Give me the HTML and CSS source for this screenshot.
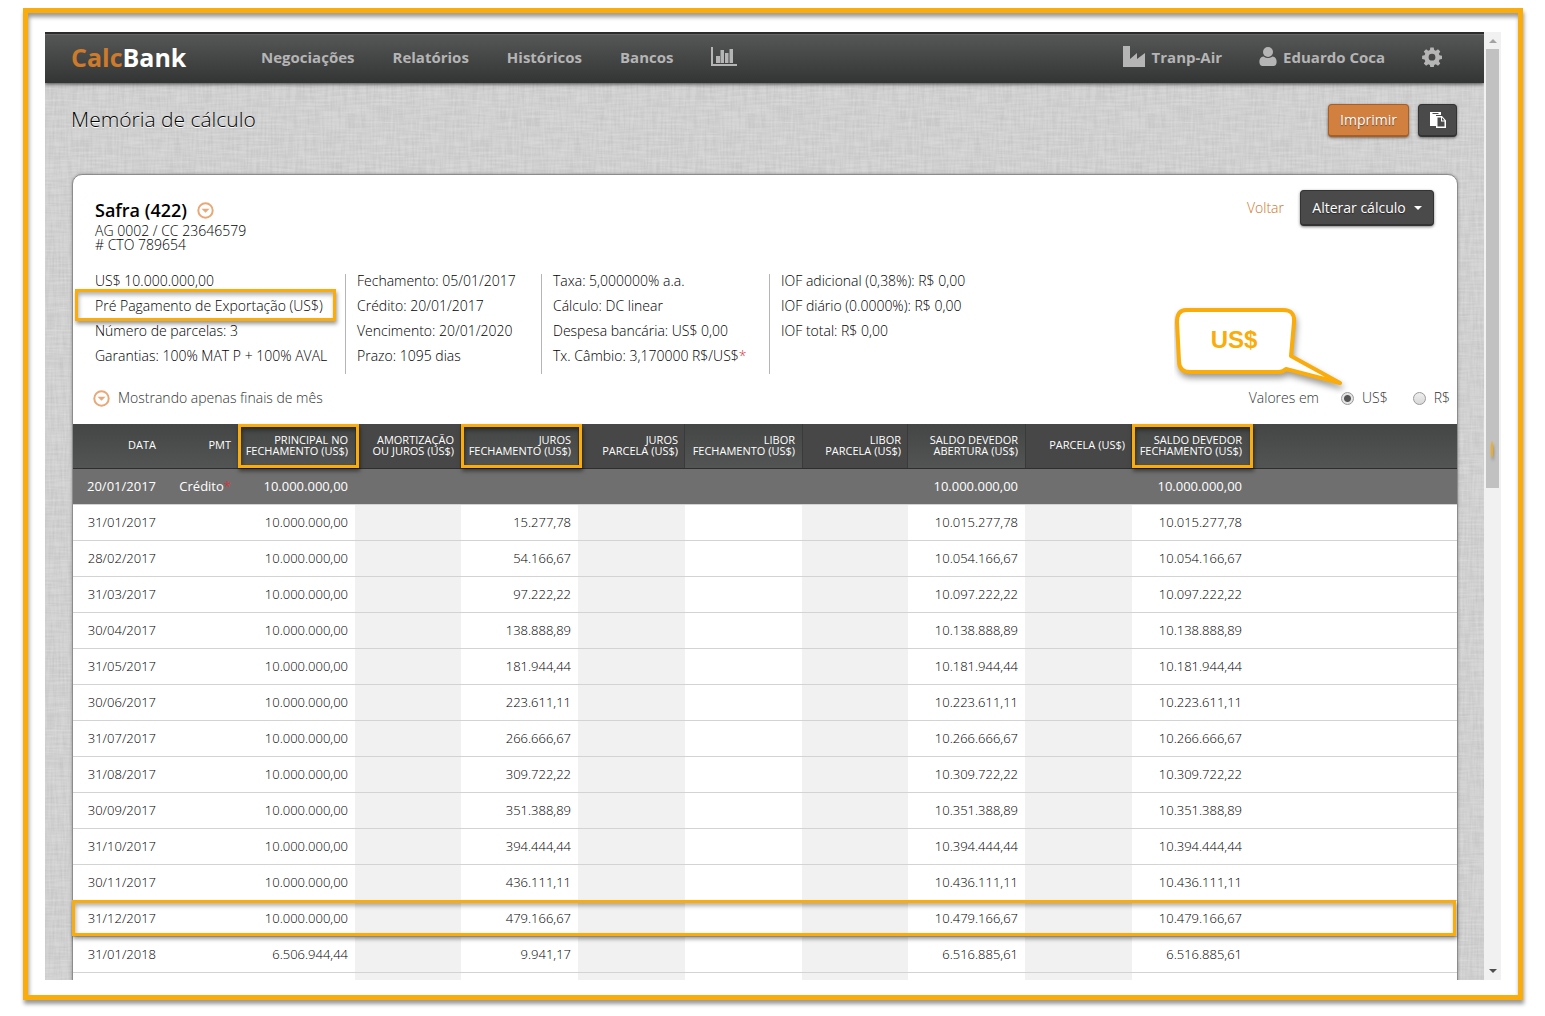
FILE: index.html
```html
<!DOCTYPE html>
<html lang="pt-BR">
<head>
<meta charset="utf-8">
<title>CalcBank – Memória de cálculo</title>
<link rel="stylesheet" href="styles.css">
</head>
<body>
<div class="frame">
  <div class="view">
    <div class="page">
      <header class="navbar">
        <a class="logo" href="#"><span class="logo-accent">Calc</span>Bank</a>
        <nav class="menu">
          <a href="#">Negociações</a>
          <a href="#">Relatórios</a>
          <a href="#">Históricos</a>
          <a href="#">Bancos</a>
          <a href="#" aria-label="Gráficos"><svg class="icon" width="26" height="20" viewBox="0 0 26 20"><path d="M0 0h2v17h24v2H0zM5 9h4v7H5zM9.500 3h3.500v13H9.500zM14 6h3.500v10H14zM18.500 2H22v14h-3.500z"/></svg></a>
        </nav>
        <nav class="account">
          <a href="#"><svg class="icon" width="23" height="21" viewBox="0 0 23 21"><path d="M0 0h7v13l7-6v6l8-6v14H0z"/></svg>Tranp-Air</a>
          <a href="#"><svg class="icon" width="18" height="19" viewBox="0 0 18 19"><circle cx="9" cy="5" r="5"/><path d="M4.500 9.500q4.500 3 9 0C17 10 18 13 17.500 16q-.5 3-3 3h-11q-2.500 0-3-3C0 13 1 10 4.500 9.500z"/></svg>Eduardo Coca</a>
          <a href="#" aria-label="Configurações"><svg class="icon" width="20" height="20" viewBox="0 0 20 20"><path fill-rule="evenodd" d="M8.300 0.500h3.400l.5 2.500 1.600.7 2.200-1.500 2.300 2.300-1.500 2.200.7 1.600 2.500.4v3.400l-2.500.5-.7 1.600 1.500 2.200-2.300 2.300-2.200-1.500-1.600.7-.5 2.500H8.300l-.4-2.500-1.600-.7-2.200 1.500-2.300-2.300 1.500-2.200-.7-1.600-2.500-.5V8.700l2.500-.4.7-1.600-1.500-2.200 2.300-2.300 2.200 1.500L7.900 3zM10 6.800a3.400 3.400 0 1 0 0 6.800 3.400 3.400 0 0 0 0-6.800z"/></svg></a>
        </nav>
      </header>

      <div class="title-bar">
        <h1>Memória de cálculo</h1>
        <div class="title-actions">
          <button class="btn btn-primary" type="button">Imprimir</button>
          <button class="btn btn-icon" type="button" aria-label="Copiar"><svg width="16" height="16" viewBox="0 0 16 16"><path fill="#fff" d="M0 0h11v3H6v11H0z"/><path fill="#4a4a4a" d="M2.500 1h6v1h-6z"/><path fill="#fff" fill-rule="evenodd" d="M6 4h6l4 4.500V16H6zM7.500 5.500v9h7V9.500H11v-4zM12 5.500v3h2.500z"/></svg></button>
        </div>
      </div>

      <main class="card">
        <section class="summary">
          <div class="bank">
            <h2>Safra (422) <svg class="disc" width="17" height="17" viewBox="0 0 17 17"><circle cx="8.500" cy="8.500" r="7.200"/><path d="M4.500 6.800h8l-4 4z"/></svg></h2>
            <p>AG 0002 / CC 23646579<br># CTO 789654</p>
          </div>
          <div class="summary-actions">
            <a class="back" href="#">Voltar</a>
            <button class="btn btn-menu" type="button">Alterar cálculo<span class="caret"></span></button>
          </div>
        </section>

        <section class="details">
          <ul>
            <li>US$ 10.000.000,00</li>
            <li><span class="marked">Pré Pagamento de Exportação (US$)</span></li>
            <li>Número de parcelas: 3</li>
            <li>Garantias: 100% MAT P + 100% AVAL</li>
          </ul>
          <ul>
            <li>Fechamento: 05/01/2017</li>
            <li>Crédito: 20/01/2017</li>
            <li>Vencimento: 20/01/2020</li>
            <li>Prazo: 1095 dias</li>
          </ul>
          <ul>
            <li>Taxa: 5,000000% a.a.</li>
            <li>Cálculo: DC linear</li>
            <li>Despesa bancária: US$ 0,00</li>
            <li>Tx. Câmbio: 3,170000 R$/US$<span class="star">*</span></li>
          </ul>
          <ul>
            <li>IOF adicional (0,38%): R$ 0,00</li>
            <li>IOF diário (0.0000%): R$ 0,00</li>
            <li>IOF total: R$ 0,00</li>
          </ul>
        </section>

        <section class="filters">
          <a class="filter-toggle" href="#"><svg class="disc" width="17" height="17" viewBox="0 0 17 17"><circle cx="8.500" cy="8.500" r="7.200"/><path d="M4.500 6.800h8l-4 4z"/></svg>Mostrando apenas finais de mês</a>
          <div class="currency" role="radiogroup" aria-labelledby="cur">
            <span id="cur">Valores em</span>
            <label><input type="radio" name="moeda" checked>US$</label>
            <label><input type="radio" name="moeda">R$</label>
            <div class="callout">
              <svg width="176" height="88" viewBox="0 0 176 88"><path d="M12 4H109Q121 4 120 16L117 50L166 77L112 63Q109 66 105 66H16Q5 66 5 55L3 16Q3 4 12 4z"/></svg>
              <span>US$</span>
            </div>
          </div>
        </section>

        <table class="ledger">
          <colgroup>
            <col class="c-date"><col class="c-pmt"><col class="c-wide"><col class="c-narrow">
            <col class="c-wide"><col class="c-mid"><col class="c-wide"><col class="c-narrow">
            <col class="c-wide"><col class="c-mid"><col class="c-wide"><col>
          </colgroup>
          <thead>
            <tr>
              <th>DATA</th><th>PMT</th><th class="boxed">PRINCIPAL NO<br>FECHAMENTO (US$)</th><th class="alt">AMORTIZAÇÃO<br>OU JUROS (US$)</th><th class="boxed">JUROS<br>FECHAMENTO (US$)</th><th class="alt">JUROS<br>PARCELA (US$)</th><th>LIBOR<br>FECHAMENTO (US$)</th><th class="alt">LIBOR<br>PARCELA (US$)</th><th>SALDO DEVEDOR<br>ABERTURA (US$)</th><th class="alt">PARCELA (US$)</th><th class="boxed">SALDO DEVEDOR<br>FECHAMENTO (US$)</th><th></th>
            </tr>
          </thead>
          <tbody>
            <tr class="credit"><td>20/01/2017</td><td>Crédito<span class="star">*</span></td><td>10.000.000,00</td><td></td><td></td><td></td><td></td><td></td><td>10.000.000,00</td><td></td><td>10.000.000,00</td><td></td></tr>
            <tr><td>31/01/2017</td><td></td><td>10.000.000,00</td><td></td><td>15.277,78</td><td></td><td></td><td></td><td>10.015.277,78</td><td></td><td>10.015.277,78</td><td></td></tr>
            <tr><td>28/02/2017</td><td></td><td>10.000.000,00</td><td></td><td>54.166,67</td><td></td><td></td><td></td><td>10.054.166,67</td><td></td><td>10.054.166,67</td><td></td></tr>
            <tr><td>31/03/2017</td><td></td><td>10.000.000,00</td><td></td><td>97.222,22</td><td></td><td></td><td></td><td>10.097.222,22</td><td></td><td>10.097.222,22</td><td></td></tr>
            <tr><td>30/04/2017</td><td></td><td>10.000.000,00</td><td></td><td>138.888,89</td><td></td><td></td><td></td><td>10.138.888,89</td><td></td><td>10.138.888,89</td><td></td></tr>
            <tr><td>31/05/2017</td><td></td><td>10.000.000,00</td><td></td><td>181.944,44</td><td></td><td></td><td></td><td>10.181.944,44</td><td></td><td>10.181.944,44</td><td></td></tr>
            <tr><td>30/06/2017</td><td></td><td>10.000.000,00</td><td></td><td>223.611,11</td><td></td><td></td><td></td><td>10.223.611,11</td><td></td><td>10.223.611,11</td><td></td></tr>
            <tr><td>31/07/2017</td><td></td><td>10.000.000,00</td><td></td><td>266.666,67</td><td></td><td></td><td></td><td>10.266.666,67</td><td></td><td>10.266.666,67</td><td></td></tr>
            <tr><td>31/08/2017</td><td></td><td>10.000.000,00</td><td></td><td>309.722,22</td><td></td><td></td><td></td><td>10.309.722,22</td><td></td><td>10.309.722,22</td><td></td></tr>
            <tr><td>30/09/2017</td><td></td><td>10.000.000,00</td><td></td><td>351.388,89</td><td></td><td></td><td></td><td>10.351.388,89</td><td></td><td>10.351.388,89</td><td></td></tr>
            <tr><td>31/10/2017</td><td></td><td>10.000.000,00</td><td></td><td>394.444,44</td><td></td><td></td><td></td><td>10.394.444,44</td><td></td><td>10.394.444,44</td><td></td></tr>
            <tr><td>30/11/2017</td><td></td><td>10.000.000,00</td><td></td><td>436.111,11</td><td></td><td></td><td></td><td>10.436.111,11</td><td></td><td>10.436.111,11</td><td></td></tr>
            <tr><td class="boxed-row">31/12/2017</td><td></td><td>10.000.000,00</td><td></td><td>479.166,67</td><td></td><td></td><td></td><td>10.479.166,67</td><td></td><td>10.479.166,67</td><td></td></tr>
            <tr><td>31/01/2018</td><td></td><td>6.506.944,44</td><td></td><td>9.941,17</td><td></td><td></td><td></td><td>6.516.885,61</td><td></td><td>6.516.885,61</td><td></td></tr>
            <tr>
              <td></td><td></td><td></td><td></td>
              <td></td><td></td><td></td><td></td>
              <td></td><td></td><td></td><td></td>
            </tr>
          </tbody>
        </table>
      </main>
    </div>
    <div class="scrollbar">
      <span class="arrow-up"></span>
      <span class="thumb"><span class="mark"></span></span>
      <span class="arrow-down"></span>
    </div>
  </div>
</div>
</body>
</html>
```
FILE: styles.css
```css
* { box-sizing: border-box; }

body {
  margin: 0;
  padding: 8px 22px 16px 23px;
  height: 100vh;
  background: #fff;
  color: #000;
  font: 300 14px/16px "Open Sans", "Noto Sans", sans-serif;
}

h1, h2, p, ul { margin: 0; padding: 0; }
a { color: inherit; text-decoration: none; }

.frame {
  height: 100%;
  padding: 19px 17px 15px;
  border: 5px solid #faac0a;
  box-shadow: 1px 4px 4px rgba(0, 0, 0, .4), inset 1px 4px 4px rgba(0, 0, 0, .4);
}

.view { display: flex; height: 100%; overflow: hidden; }

/* Linen texture: two stretched noises, one per thread direction */
.page {
  flex: 1;
  min-width: 0;
  background-color: #d0d0d0;
  background-image:
    url("data:image/svg+xml,%3Csvg xmlns='http://www.w3.org/2000/svg' width='400' height='400'%3E%3Cfilter id='a' x='0' y='0' width='100%25' height='100%25'%3E%3CfeTurbulence type='fractalNoise' baseFrequency='.04 .5' numOctaves='2' stitchTiles='stitch'/%3E%3CfeColorMatrix values='0 0 0 0 1 0 0 0 0 1 0 0 0 0 1 .4 0 0 0 -.12'/%3E%3C/filter%3E%3Crect width='400' height='400' filter='url(%23a)'/%3E%3C/svg%3E"),
    url("data:image/svg+xml,%3Csvg xmlns='http://www.w3.org/2000/svg' width='400' height='400'%3E%3Cfilter id='a' x='0' y='0' width='100%25' height='100%25'%3E%3CfeTurbulence type='fractalNoise' baseFrequency='.5 .04' numOctaves='2' stitchTiles='stitch'/%3E%3CfeColorMatrix values='0 0 0 0 0 0 0 0 0 0 0 0 0 0 0 .1 0 0 0 -.03'/%3E%3C/filter%3E%3Crect width='400' height='400' filter='url(%23a)'/%3E%3C/svg%3E");
}

/* Navigation bar */
.navbar {
  display: flex;
  align-items: center;
  height: 51px;
  padding: 0 42px 4px 26px;
  border-top: 2px solid #2b2b2d;
  background: linear-gradient(#666 0 1px, #555756 1px, #333434);
  box-shadow: 0 1px 4px rgba(0, 0, 0, .7);
  color: #b5b5b5;
  font-size: 15px;
  font-weight: 700;
}
.logo { width: 190px; color: #fff; font-size: 25px; line-height: 28px; }
.logo-accent { color: #cd7a2b; }
.menu, .account { display: flex; align-items: center; gap: 38px; }
.account { gap: 37px; margin-left: auto; }
.account a { display: flex; align-items: center; gap: 6px; }
.icon { display: block; fill: #b5b5b5; }

/* Title */
.title-bar {
  display: flex;
  justify-content: space-between;
  align-items: center;
  height: 74px;
  padding: 0 27px 0 26px;
}
h1 { padding-bottom: 2px; font-size: 21px; font-weight: 300; line-height: 28px; text-shadow: 0 1px 0 #fff; }
.title-actions { display: flex; gap: 9px; }

.btn {
  display: flex;
  align-items: center;
  justify-content: center;
  height: 33px;
  padding: 0 11px;
  border: 1px solid #333;
  border-bottom-width: 2px;
  border-radius: 4px;
  background: #4a4a4a;
  box-shadow: 0 1px 3px rgba(0, 0, 0, .5);
  color: #fff;
  font: 400 14px/16px "Open Sans", "Noto Sans", sans-serif;
  text-shadow: 0 1px 1px rgba(0, 0, 0, .5);
}
.btn-primary { min-width: 81px; border-color: #a95e24; background: #d28040; }
.btn-icon { width: 39px; padding: 0; }
.btn-menu { min-width: 134px; height: 36px; gap: 8px; }
.caret { border: 4px solid transparent; border-top-color: #fff; border-bottom: 0; }

/* Card */
.card {
  margin: 17px 26px 0 27px;
  border: 1px solid #8c8c8c;
  border-radius: 10px 10px 0 0;
  background: #fff;
  box-shadow: 0 0 3px rgba(0, 0, 0, .3);
}
.summary {
  display: flex;
  justify-content: space-between;
  align-items: flex-start;
  padding: 15px 23px 0 22px;
}
h2 {
  display: flex;
  align-items: center;
  gap: 10px;
  padding-top: 6px;
  font-size: 18px;
  font-weight: 600;
  line-height: 28px;
}
.bank p { line-height: 14px; }
.disc { fill: #e8a878; }
.disc circle { fill: none; stroke: #e8a878; stroke-width: 2; }
.summary-actions { display: flex; align-items: center; gap: 16px; }
.back { color: #d0732c; }

.details {
  display: grid;
  grid-template-columns: 250px 196px 228px 1fr;
  padding: 22px 22px 0;
}
.details ul { height: 100px; padding-left: 11px; border-left: 1px solid #b5b5b5; list-style: none; }
.details ul:first-child { padding-left: 0; border-left: 0; }
.details li { height: 25px; line-height: 14px; white-space: nowrap; }
.star { color: #d9333f; }
.marked { position: relative; }
.marked::after {
  content: "";
  position: absolute;
  inset: -7px -13px -6px -20px;
  border: 3px solid #faac0a;
  box-shadow: 1px 3px 4px rgba(0, 0, 0, .4), inset 1px 3px 4px rgba(0, 0, 0, .3);
}

.filters {
  display: flex;
  align-items: center;
  justify-content: space-between;
  height: 50px;
  padding: 0 7px 2px 20px;
  color: #333;
}
.filter-toggle { display: flex; align-items: center; gap: 8px; }
.currency { position: relative; display: flex; align-items: center; }
.currency label { display: flex; align-items: center; gap: 8px; margin-left: 25px; }
.currency span + label { margin-left: 22px; }
.currency input {
  appearance: none;
  width: 13px;
  height: 13px;
  margin: 0;
  border: 1px solid #999;
  border-radius: 50%;
  background: linear-gradient(#eee, #d8d8d8);
}
.currency input:checked { background: radial-gradient(circle, #555 3px, #e4e4e4 4px); }

.callout { position: absolute; right: 100px; bottom: 12px; width: 176px; height: 88px; }
.callout path {
  fill: #fff;
  stroke: #faac0a;
  stroke-width: 4;
  stroke-linejoin: round;
  filter: drop-shadow(1px 4px 3px rgba(0, 0, 0, .4));
}
.callout span {
  position: absolute;
  left: 0;
  top: 20px;
  width: 120px;
  color: #faac0a;
  font: 700 24px/28px "Liberation Sans", Arial, sans-serif;
  text-align: center;
}

/* Table */
.ledger { width: 100%; border-collapse: collapse; table-layout: fixed; font-size: 13px; }
.c-date { width: 90px; }
.c-pmt { width: 75px; }
.c-wide { width: 117px; }
.c-mid { width: 107px; }
.c-narrow { width: 106px; }
.ledger th, .ledger td { padding: 0 7px 0 0; text-align: right; white-space: nowrap; }
.ledger thead { background: linear-gradient(#434645, #535554); }
.ledger th {
  position: relative;
  height: 44px;
  padding-bottom: 2px;
  border-bottom: 1px solid #2e2e2e;
  color: #fff;
  font-size: 11px;
  font-weight: 400;
  line-height: 11px;
}
.ledger th.alt { background: #474747; box-shadow: inset 1px 0 #3a3a3a, inset -1px 0 #3a3a3a; }
.boxed::after {
  content: "";
  position: absolute;
  z-index: 1;
  inset: 0 -4px 0 0;
  border: 3px solid #faac0a;
  box-shadow: 1px 3px 4px rgba(0, 0, 0, .5), inset 1px 3px 4px rgba(0, 0, 0, .4);
}
.ledger td { height: 36px; border-bottom: 1px solid #d3d3d3; }
.ledger td:nth-child(4), .ledger td:nth-child(6), .ledger td:nth-child(8), .ledger td:nth-child(10) { background: #f1f1f1; }
.ledger .credit td { background: #6f6f6f; color: #fff; font-weight: 400; }
.ledger tr:has(.boxed-row) { position: relative; }
.boxed-row::after {
  content: "";
  position: absolute;
  inset: 0 1px 0 -1px;
  border: 3px solid #faac0a;
  box-shadow: 1px 3px 4px rgba(0, 0, 0, .4), inset 1px 3px 4px rgba(0, 0, 0, .3);
}

/* Scrollbar */
.scrollbar {
  display: flex;
  flex-direction: column;
  align-items: center;
  width: 17px;
  padding: 7px 0;
  background: #f1f1f1;
}
.arrow-up { border: 4px solid transparent; border-top: 0; border-bottom-color: #a3a3a3; }
.arrow-down { margin-top: auto; border: 4px solid transparent; border-top-color: #505050; border-bottom: 0; }
.thumb { position: relative; width: 13px; height: 47%; margin-top: 6px; background: #c1c1c1; }
.mark {
  position: absolute;
  right: 6px;
  bottom: 30px;
  width: 2px;
  height: 17px;
  border-radius: 50%;
  background: #faac0a;
  box-shadow: 1px 3px 3px rgba(0, 0, 0, .3);
}
```
